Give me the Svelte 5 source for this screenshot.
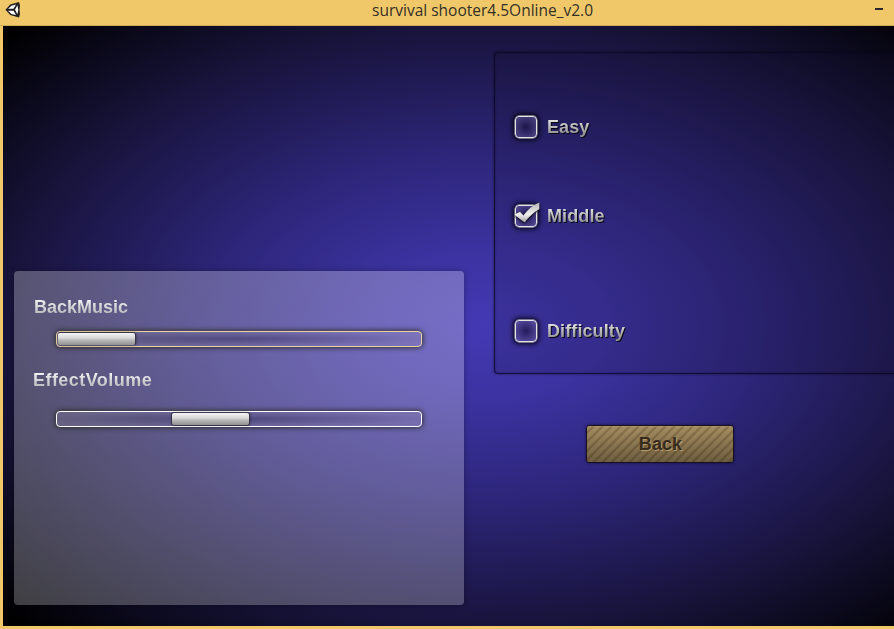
<script>
  const title = 'survival shooter4.5Online_v2.0';
  let volumes = $state([
    { name: 'BackMusic', offset: 1, active: true },
    { name: 'EffectVolume', offset: 115, active: false }
  ]);
  let difficulties = $state([
    { name: 'Easy', checked: false },
    { name: 'Middle', checked: true },
    { name: 'Difficulty', checked: false }
  ]);
  function choose(i) {
    difficulties.forEach((d, n) => (d.checked = n === i));
  }
</script>

<div class="window">
  <header>
    <svg class="logo" viewBox="0 0 16 18" width="16" height="18">
      <path d="M.5 8.8 5.2 3.4 14 1 15 4.5 14.5 8.8 15 13 14 16.4 5.2 14Z" fill="#202022" />
      <path d="M3.1 7.8 6.4 4.7 11 3.4 8.5 7.8Z M3.1 9.8 8.5 9.8 11 14.1 6.4 12.9Z M12.4 4.3 13.3 8.8 12.4 13.2 10 8.8Z" fill="#fff" />
    </svg>
    <h1>{title}</h1>
    <button class="minimize" aria-label="Minimize"></button>
  </header>

  <main>
    <section class="sound">
      {#each volumes as v}
        <div class="volume" class:active={v.active}>
          <span class="label">{v.name}</span>
          <div class="track"><div class="thumb" style="margin-left: {v.offset}px"></div></div>
        </div>
      {/each}
    </section>

    <div class="side">
      <section class="levels">
        {#each difficulties as d, i}
          <button class="level" onclick={() => choose(i)}>
            <span class="box">
              {#if d.checked}
                <svg class="tick" viewBox="0 0 28 24" width="28" height="24">
                  <defs>
                    <linearGradient id="silver" x1="0" y1="0" x2="0" y2="1">
                      <stop offset="0" stop-color="#b4b4b4" />
                      <stop offset=".6" stop-color="#efefef" />
                      <stop offset="1" stop-color="#a0a0a0" />
                    </linearGradient>
                  </defs>
                  <path d="M.3 12.8 5.9 9.8 9.4 13.5C13.5 7.5 18.5 3 25.3.4L25.4 7C19.5 10.2 14.8 15 10.6 20.6Z" fill="url(#silver)" />
                </svg>
              {/if}
            </span>
            <span class="label">{d.name}</span>
          </button>
        {/each}
      </section>
      <button class="back"><span>Back</span></button>
    </div>
  </main>
</div>

<style>
  :global(body) { overflow: hidden; }
  button { border: 0; padding: 0; background: none; font: inherit; cursor: pointer; }
  .window {
    box-sizing: border-box;
    width: 894px;
    height: 629px;
    overflow: hidden;
    background: #f0c869;
    font: bold 18px/20px "Liberation Sans", Arial, sans-serif;
  }
  header {
    box-sizing: border-box;
    display: flex;
    height: 26px;
    border-bottom: 1px solid #cda958;
  }
  .logo { margin: 1px 0 0 5px; flex: none; }
  h1 {
    margin: 0 0 0 351px;
    width: 300px;
    white-space: nowrap;
    font: 400 15.5px/20px "Open Sans", "Noto Sans", sans-serif;
    color: #333027;
  }
  .minimize { width: 8px; height: 2px; margin: 8px 0 0 203px; background: #29282c; }
  main {
    display: flex;
    align-items: flex-start;
    width: 960px;
    height: 600px;
    margin-left: 3px;
    background: radial-gradient(ellipse farthest-corner at 50% 50%, #4439b4 0%, #3c32a0 18%, #2c2577 42%, #18143c 70%, #000 98%);
  }
  .sound {
    box-sizing: border-box;
    flex: none;
    width: 450px;
    height: 334px;
    margin: 245px 0 0 11px;
    padding: 26px 42px 0;
    border-radius: 4px;
    background: linear-gradient(rgba(255, 255, 255, .27), rgba(255, 255, 255, .245));
    box-shadow: 0 0 6px rgba(0, 0, 0, .3);
  }
  .volume { display: flex; flex-direction: column; align-items: flex-start; height: 73px; }
  .label {
    background: linear-gradient(#e0e0e0 15%, #929292 85%);
    -webkit-background-clip: text;
    background-clip: text;
    color: transparent;
  }
  .volume .label { margin-left: -22px; background-image: linear-gradient(#f2f2f2 15%, #b5b5b9 90%); }
  .volume + .volume .label { margin-left: -23px; letter-spacing: .45px; }
  .track {
    box-sizing: border-box;
    display: flex;
    width: 366px;
    height: 16px;
    margin-top: 14px;
    border: 1px solid #fff;
    border-radius: 4px;
    background: radial-gradient(ellipse at center, rgba(45, 38, 75, .38), rgba(150, 140, 170, .25) 75%);
    box-shadow: 0 0 5px 1px rgba(40, 40, 35, .85);
  }
  .volume + .volume .track { margin-top: 21px; }
  .active .track { border-color: #ead3a0; }
  .thumb {
    width: 77px;
    height: 12px;
    margin-top: 1px;
    border-radius: 2px;
    background: linear-gradient(#f5f5f5, #d9d9d9 40%, #b1b1b1 65%, #929292);
    box-shadow: 0 0 0 1px #39344a, 1px 0 3px rgba(0, 0, 0, .55);
  }
  .active .thumb { box-shadow: 1px 0 0 #39344a, 0 -1px 0 #39344a, 1px 0 3px rgba(0, 0, 0, .55); }
  .side { flex: none; display: flex; flex-direction: column; margin: 26px 0 0 30px; }
  .levels {
    box-sizing: border-box;
    display: flex;
    flex-direction: column;
    width: 440px;
    height: 322px;
    padding: 60px 0 0 17px;
    border: 1px solid rgba(8, 5, 35, .75);
    border-radius: 4px;
    background: rgba(20, 15, 50, .18);
    box-shadow: 0 0 3px rgba(0, 0, 0, .55), inset 0 0 2px rgba(0, 0, 0, .4);
  }
  .level {
    flex: none;
    display: flex;
    align-items: center;
    align-self: flex-start;
    gap: 10px;
    height: 28px;
    margin: 0 0 61px 3px;
  }
  .level + .level { margin-bottom: 87px; }
  .box {
    box-sizing: border-box;
    position: relative;
    width: 22px;
    height: 22px;
    border: 1.5px solid #e4e4e4;
    border-radius: 4px;
    background: radial-gradient(circle, rgba(24, 16, 65, .7), rgba(110, 100, 155, .45) 80%);
    box-shadow: 0 0 0 .4px #ddd, 0 0 5px 2px rgba(0, 0, 8, .9);
  }
  .tick { position: absolute; left: -2px; top: -4px; filter: drop-shadow(0 1px 1px #000); }
  .level .label { filter: drop-shadow(1px 1px 0 #080713); letter-spacing: .1px; }
  .back {
    box-sizing: border-box;
    width: 148px;
    height: 38px;
    margin: 51px 0 0 92px;
    padding-left: 1px;
    border: 1px solid #171024;
    border-radius: 3px;
    background:
      linear-gradient(rgba(255, 215, 130, .08), rgba(35, 25, 10, .38)),
      repeating-linear-gradient(135deg, #9d875f 0 3.3px, #836e4b 4px 5.8px, #9d875f 6.36px);
    box-shadow: 0 0 3px rgba(0, 0, 0, .55), inset 0 1px 0 rgba(210, 180, 120, .3);
    color: #372b1c;
    text-shadow: 1px 1px 0 #b59b6a;
  }
  .back span { letter-spacing: .1px; }
</style>
